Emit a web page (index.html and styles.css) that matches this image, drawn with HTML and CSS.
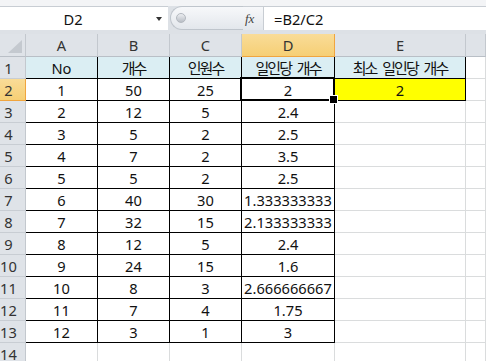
FILE: index.html
```html
<!DOCTYPE html>
<html lang="ko">
<head>
    <meta charset="UTF-8">
    <title>일인당 개수</title>
    <link rel="stylesheet" href="styles.css">
</head>
<body>
    <div class="fbar">
        <div class="namebox">
            <span class="name">D2</span>
            <span class="arrow"></span>
        </div>
        <div class="grip"><span class="dot"></span></div>
        <div class="fx">fx</div>
        <div class="formula">=B2/C2</div>
    </div>

    <div class="sheet">
        <div class="corner">
            <svg width="14" height="13" viewBox="0 0 14 13"><polygon points="14,0 14,13 0,13" fill="#c4c9cf"/></svg>
        </div>
        <div class="ch">A</div>
        <div class="ch">B</div>
        <div class="ch">C</div>
        <div class="ch sel">D</div>
        <div class="ch">E</div>
        <div class="ch"></div>

        <div class="rh">1</div>
        <div class="c t head">No</div>
        <div class="c t head"><span class="ko">개수</span></div>
        <div class="c t head"><span class="ko">인원수</span></div>
        <div class="c t head"><span class="ko">일인당 개수</span></div>
        <div class="c t head"><span class="ko">최소 일인당 개수</span></div>
        <div class="c"></div>

        <div class="rh sel">2</div>
        <div class="c t">1</div>
        <div class="c t">50</div>
        <div class="c t">25</div>
        <div class="c t active">2</div>
        <div class="c t min">2</div>
        <div class="c"></div>

        <div class="rh">3</div>
        <div class="c t">2</div><div class="c t">12</div><div class="c t">5</div><div class="c t">2.4</div><div class="c"></div><div class="c"></div>

        <div class="rh">4</div>
        <div class="c t">3</div><div class="c t">5</div><div class="c t">2</div><div class="c t">2.5</div><div class="c"></div><div class="c"></div>

        <div class="rh">5</div>
        <div class="c t">4</div><div class="c t">7</div><div class="c t">2</div><div class="c t">3.5</div><div class="c"></div><div class="c"></div>

        <div class="rh">6</div>
        <div class="c t">5</div><div class="c t">5</div><div class="c t">2</div><div class="c t">2.5</div><div class="c"></div><div class="c"></div>

        <div class="rh">7</div>
        <div class="c t">6</div><div class="c t">40</div><div class="c t">30</div><div class="c t">1.333333333</div><div class="c"></div><div class="c"></div>

        <div class="rh">8</div>
        <div class="c t">7</div><div class="c t">32</div><div class="c t">15</div><div class="c t">2.133333333</div><div class="c"></div><div class="c"></div>

        <div class="rh">9</div>
        <div class="c t">8</div><div class="c t">12</div><div class="c t">5</div><div class="c t">2.4</div><div class="c"></div><div class="c"></div>

        <div class="rh">10</div>
        <div class="c t">9</div><div class="c t">24</div><div class="c t">15</div><div class="c t">1.6</div><div class="c"></div><div class="c"></div>

        <div class="rh">11</div>
        <div class="c t">10</div><div class="c t">8</div><div class="c t">3</div><div class="c t">2.666666667</div><div class="c"></div><div class="c"></div>

        <div class="rh">12</div>
        <div class="c t">11</div><div class="c t">7</div><div class="c t">4</div><div class="c t">1.75</div><div class="c"></div><div class="c"></div>

        <div class="rh">13</div>
        <div class="c t">12</div><div class="c t">3</div><div class="c t">1</div><div class="c t">3</div><div class="c"></div><div class="c"></div>

        <div class="rh">14</div>
        <div class="c"></div><div class="c"></div><div class="c"></div><div class="c"></div><div class="c"></div><div class="c"></div>
    </div>
</body>
</html>
```

FILE: styles.css
```css
* {
    box-sizing: border-box;
}
html, body {
    height: 100%;
}
body {
    margin: 0;
    overflow: hidden;
    background: #fff;
    font-family: "Noto Sans", "Noto Sans CJK KR", sans-serif;
    font-size: 14.67px;
    color: #111;
}

/* formula bar */
.fbar {
    display: flex;
    height: 34px;
    padding: 6px 0 4px;
    background: linear-gradient(#f3f4f6 0, #f3f4f6 6px, #dde1e6 6px);
}
.namebox {
    display: flex;
    align-items: center;
    width: 168px;
    background: #fff;
    border-top: 1px solid #c8cdd3;
}
.name {
    width: 146px;
    text-align: center;
}
.arrow {
    margin-left: 10px;
    width: 0;
    height: 0;
    border-left: 3.5px solid transparent;
    border-right: 3.5px solid transparent;
    border-top: 4px solid #333;
}
.grip {
    display: flex;
    align-items: center;
    width: 73px;
    margin-left: 2px;
    padding-left: 5px;
    background: linear-gradient(#f7f8fa, #e3e7ec);
    border: 1px solid #bfc5cc;
    border-right: none;
    border-radius: 12px 0 0 12px;
}
.dot {
    width: 10px;
    height: 10px;
    border-radius: 50%;
    background: linear-gradient(#eceef1, #b9bec5);
    border: 1px solid #b3b8bf;
}
.fx {
    width: 20px;
    padding-left: 2px;
    display: flex;
    align-items: center;
    background: linear-gradient(#f7f8fa, #e3e7ec);
    border-top: 1px solid #c8cdd3;
    font-family: "Liberation Serif", serif;
    font-style: italic;
    font-size: 13px;
    color: #444;
}
.formula {
    flex: 1;
    display: flex;
    align-items: center;
    padding-left: 10px;
    background: #fff;
    border-top: 1px solid #c8cdd3;
    border-left: 1px solid #c8cdd3;
}

/* grid */
.sheet {
    display: grid;
    grid-template-columns: 26px 72px 72px 72px 93px 131px 1fr;
    grid-template-rows: 23px;
    grid-auto-rows: 22px;
}
.corner, .ch, .rh {
    background: #dfe3e8;
    color: #333;
    border-right: 1px solid #c3c8ce;
    border-bottom: 1px solid #b9bfc6;
}
.corner {
    display: flex;
    align-items: flex-end;
    justify-content: flex-end;
    padding: 0 3px 3px 0;
}
.ch {
    display: flex;
    align-items: center;
    justify-content: center;
}
.rh {
    display: flex;
    align-items: center;
    justify-content: center;
    padding-right: 8px;
    border-bottom-color: #c8cdd3;
}
.ch.sel, .rh.sel {
    background: linear-gradient(#f9dc98, #f6cf75);
    border-color: #f0a53f;
}
.c {
    display: flex;
    align-items: center;
    justify-content: center;
    border-right: 1px solid #dadcdd;
    border-bottom: 1px solid #dadcdd;
    white-space: nowrap;
}
.c.t {
    border-right-color: #000;
    border-bottom-color: #000;
}
.head {
    background: #dbeef3;
}
.ko {
    font-size: 15px;
    letter-spacing: -2px;
    word-spacing: 4px;
}
.min {
    background: #ffff00;
}
.active {
    position: relative;
}
.active::after {
    content: "";
    position: absolute;
    top: -2px;
    left: -2px;
    right: -1px;
    bottom: -1px;
    border: 2px solid #000;
}
.active::before {
    content: "";
    position: absolute;
    right: -4px;
    bottom: -4px;
    width: 7px;
    height: 7px;
    background: #000;
    border: 1px solid #fff;
    z-index: 1;
}
```
